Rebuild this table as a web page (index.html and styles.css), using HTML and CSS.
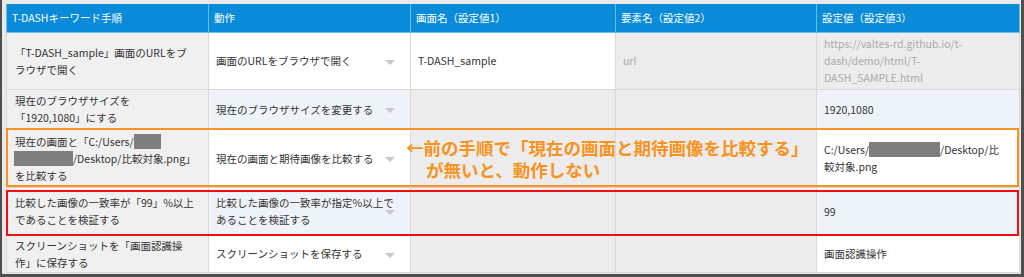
FILE: index.html
```html
<!DOCTYPE html>
<html lang="ja">
<head>
<meta charset="utf-8">
<title>T-DASH</title>
<link rel="stylesheet" href="styles.css">
</head>
<body>
<div class="frame">
  <div class="wrap">
    <table class="grid">
      <colgroup>
        <col class="c1"><col class="c2"><col class="c3"><col class="c4"><col class="c5">
      </colgroup>
      <thead>
        <tr class="hrow">
          <th>T-DASHキーワード手順</th>
          <th>動作</th>
          <th>画面名（設定値1）</th>
          <th>要素名（設定値2）</th>
          <th>設定値（設定値3）</th>
        </tr>
      </thead>
      <tbody>
        <tr class="r1">
          <td class="step">「T-DASH_sample」画面のURLをブ<br>ラウザで開く</td>
          <td class="act white"><div class="sel"><span class="txt">画面のURLをブラウザで開く</span><i class="tri"></i></div></td>
          <td class="white">T-DASH_sample</td>
          <td class="off muted">url</td>
          <td class="off muted">https://valtes-rd.github.io/t-<br>dash/demo/html/T-<br>DASH_SAMPLE.html</td>
        </tr>
        <tr class="r2">
          <td class="step">現在のブラウザサイズを<br>「1920,1080」にする</td>
          <td class="act blue"><div class="sel"><span class="txt">現在のブラウザサイズを変更する</span><i class="tri"></i></div></td>
          <td class="off"></td>
          <td class="off"></td>
          <td class="blue">1920,1080</td>
        </tr>
        <tr class="r3">
          <td class="step">現在の画面と「C:/Users/<b class="redact r-a"></b><br><b class="redact r-b"></b>/Desktop/比較対象.png」<br>を比較する</td>
          <td class="act white"><div class="sel"><span class="txt">現在の画面と期待画像を比較する</span><i class="tri"></i></div></td>
          <td class="off"></td>
          <td class="off"></td>
          <td class="white">C:/Users/<b class="redact r-c"></b>/Desktop/比<br>較対象.png</td>
        </tr>
        <tr class="r4">
          <td class="step">比較した画像の一致率が「99」%以上<br>であることを検証する</td>
          <td class="act blue"><div class="sel"><span class="txt">比較した画像の一致率が指定%以上で<br>あることを検証する</span><i class="tri"></i></div></td>
          <td class="off"></td>
          <td class="off"></td>
          <td class="blue">99</td>
        </tr>
        <tr class="r5">
          <td class="step">スクリーンショットを「画面認識操<br>作」に保存する</td>
          <td class="act white"><div class="sel"><span class="txt">スクリーンショットを保存する</span><i class="tri"></i></div></td>
          <td class="off"></td>
          <td class="off"></td>
          <td class="white">画面認識操作</td>
        </tr>
      </tbody>
    </table>
    <div class="box box-orange"></div>
    <div class="box box-red"></div>
    <div class="note">
      <div class="note-line">←前の手順で「現在の画面と期待画像を比較する」</div>
      <div class="note-line indent">が無いと、動作しない</div>
    </div>
  </div>
</div>
</body>
</html>
```
FILE: styles.css
```css
html, body {
  margin: 0;
  padding: 0;
  background: #e6e6e6;
}
body {
  width: 1024px;
  height: 277px;
  overflow: hidden;
  font-family: "Noto Sans CJK JP", "Noto Sans", sans-serif;
  font-size: 10.5px;
  color: #333;
}
.frame {
  box-sizing: border-box;
  width: 1024px;
  height: 277px;
  border-left: 2px solid #4f4f4f;
  border-right: 3px solid #4f4f4f;
  border-bottom: 3px solid #4f4f4f;
  background: #e9e9e9;
  padding: 4px 0 0 4px;
}
.wrap {
  position: relative;
  width: 1013px;
}
.grid {
  table-layout: fixed;
  border-collapse: collapse;
  width: 1013px;
}
.c1 { width: 202px; }
.c2 { width: 202px; }
.c3 { width: 205px; }
.c4 { width: 201px; }
.c5 { width: 203px; }
th, td {
  border: 1px solid #d9d9d9;
  padding: 0 7px;
  vertical-align: middle;
  text-align: left;
  line-height: 17px;
  white-space: nowrap;
  overflow: hidden;
}
.hrow { height: 28px; }
th {
  background: #0a8bd9;
  color: #fff;
  font-weight: normal;
  font-size: 10.5px;
  border-color: #6cbcec;
  border-top: none;
  padding-left: 5px;
}
.r1 { height: 57px; }
.r2 { height: 40px; }
.r3 { height: 58px; }
.r4 { height: 48px; }
.r5 { height: 37px; }
.step {
  background: #f0f0f0;
  padding-left: 8px;
}
.white { background: #ffffff; }
.blue { background: #eef3f9; }
.off { background: #ececec; }
.muted { color: #a9a9a9; }
.act { padding-right: 15px; }
.sel {
  display: grid;
  grid-template-columns: minmax(0, 1fr) 10px;
  align-items: center;
}
.txt {
  overflow: visible;
}
.tri {
  display: block;
  width: 0;
  height: 0;
  border-left: 5px solid transparent;
  border-right: 5px solid transparent;
  border-top: 5px solid #c9c9c9;
  margin-top: 3px;
}
.redact {
  display: inline-block;
  background: #7f7f7f;
  height: 15px;
  vertical-align: -3px;
}
.r-a { width: 27px; }
.r-b { width: 59px; margin-left: -1px; }
.r-c { width: 71px; }
.box {
  position: absolute;
  box-sizing: border-box;
  pointer-events: none;
}
.box-orange {
  left: 0;
  top: 124px;
  width: 1013px;
  height: 59px;
  border: 2px solid #f7931e;
}
.box-red {
  left: 0;
  top: 186px;
  width: 1013px;
  height: 46px;
  border: 2px solid #f01010;
}
.note {
  position: absolute;
  left: 400px;
  top: 133px;
  color: #f7931e;
  font-size: 17.5px;
  font-weight: 700;
  line-height: 21px;
  white-space: nowrap;
}
.note-line {
  height: 22px;
}
.indent { padding-left: 20px; }
```
